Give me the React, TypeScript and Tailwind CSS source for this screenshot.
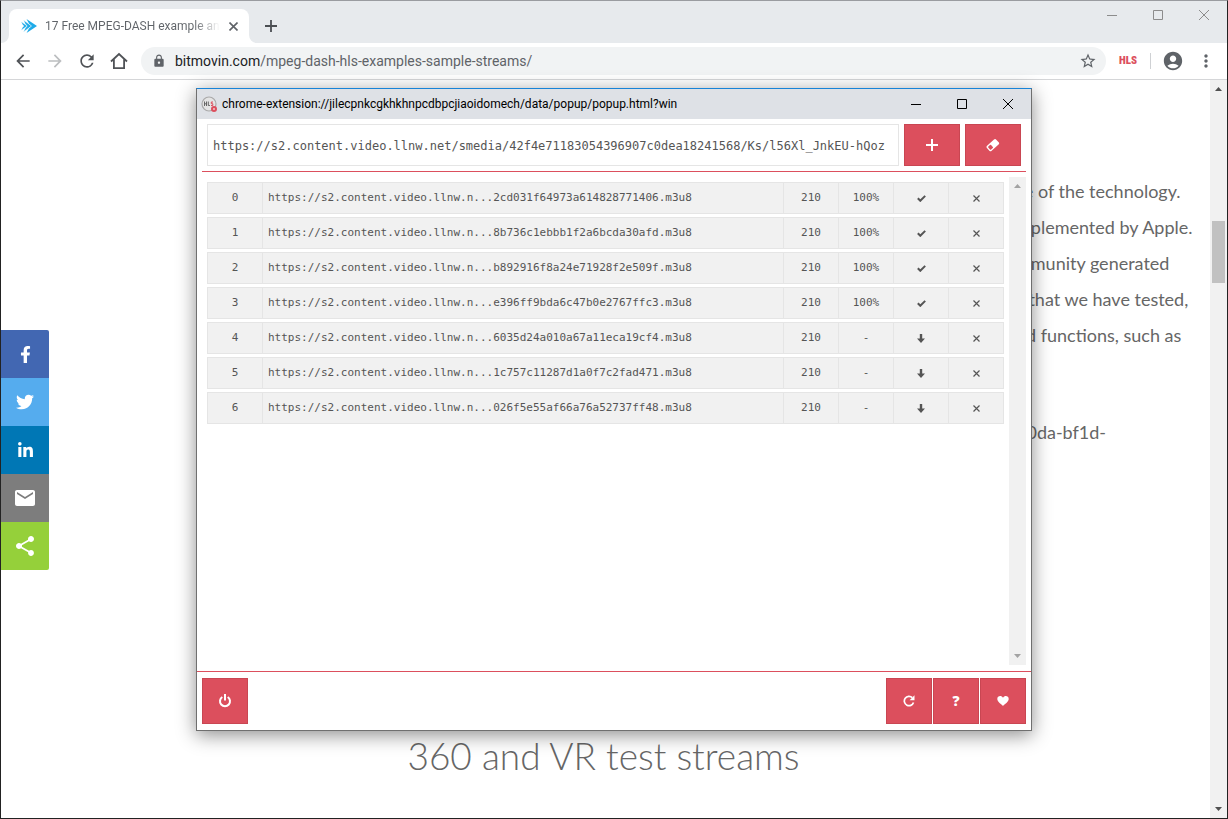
import React from 'react';
import { MdArrowBack, MdArrowForward, MdRefresh, MdLock, MdStarBorder, MdAccountCircle, MdMoreVert, MdEmail, MdShare } from 'react-icons/md';
import { FaFacebookF, FaTwitter, FaLinkedinIn } from 'react-icons/fa';

interface Segment {
  id: number;
  url: string;
  count: number;
  progress: string;
  done: boolean;
}

const segments: Segment[] = [
  { id: 0, url: 'https://s2.content.video.llnw.n...2cd031f64973a614828771406.m3u8', count: 210, progress: '100%', done: true },
  { id: 1, url: 'https://s2.content.video.llnw.n...8b736c1ebbb1f2a6bcda30afd.m3u8', count: 210, progress: '100%', done: true },
  { id: 2, url: 'https://s2.content.video.llnw.n...b892916f8a24e71928f2e509f.m3u8', count: 210, progress: '100%', done: true },
  { id: 3, url: 'https://s2.content.video.llnw.n...e396ff9bda6c47b0e2767ffc3.m3u8', count: 210, progress: '100%', done: true },
  { id: 4, url: 'https://s2.content.video.llnw.n...6035d24a010a67a11eca19cf4.m3u8', count: 210, progress: '-', done: false },
  { id: 5, url: 'https://s2.content.video.llnw.n...1c757c11287d1a0f7c2fad471.m3u8', count: 210, progress: '-', done: false },
  { id: 6, url: 'https://s2.content.video.llnw.n...026f5e55af66a76a52737ff48.m3u8', count: 210, progress: '-', done: false },
];

const introLines = [
  'se of the technology.',
  'mplemented by Apple.',
  'mmunity generated',
  's that we have tested,',
  'nd functions, such as',
];

const shareLinks = [
  { label: 'Facebook', className: 'bg-[#4267b2]', icon: <FaFacebookF size={17} /> },
  { label: 'Twitter', className: 'bg-[#55acee]', icon: <FaTwitter size={18} /> },
  { label: 'LinkedIn', className: 'bg-[#0077b5]', icon: <FaLinkedinIn size={17} /> },
  { label: 'Email', className: 'bg-[#7d7d7d]', icon: <MdEmail size={24} /> },
  { label: 'Share', className: 'bg-[#95d03a]', icon: <MdShare size={24} /> },
];

const Triangle: React.FC<{ down?: boolean; className?: string }> = ({ down, className }) => (
  <svg className={className} width="7" height="4" viewBox="0 0 7 4" fill="currentColor" aria-hidden="true">
    <path d={down ? 'M0 0h7L3.5 4z' : 'M0 4h7L3.5 0z'} />
  </svg>
);

const WindowButtons: React.FC<{ className: string }> = ({ className }) => (
  <div className={`flex ${className}`}>
    <button aria-label="Minimize" className="flex w-[46px] items-center justify-center">
      <svg width="10" height="10" viewBox="0 0 10 10" stroke="currentColor">
        <path d="M0 5.5h10" />
      </svg>
    </button>
    <button aria-label="Maximize" className="flex w-[46px] items-center justify-center">
      <svg width="10" height="10" viewBox="0 0 10 10" fill="none" stroke="currentColor">
        <path d="M.5.5h9v9h-9z" />
      </svg>
    </button>
    <button aria-label="Close" className="flex w-[46px] items-center justify-center">
      <svg width="10" height="10" viewBox="0 0 10 10" stroke="currentColor">
        <path d="M0 0l10 10M10 0L0 10" />
      </svg>
    </button>
  </div>
);

const TabStrip = () => (
  <div className="flex h-[42px] shrink-0 bg-[#e7eaed]">
    <div className="relative mt-2 ml-2 flex w-60 items-center rounded-t-lg bg-white pr-2.5 pl-3 text-[#5f6368]">
      <svg className="absolute bottom-0 -left-2" width="8" height="8" viewBox="0 0 8 8" fill="#fff">
        <path d="M8 0v8H0a8 8 0 0 0 8-8z" />
      </svg>
      <svg className="absolute -right-2 bottom-0" width="8" height="8" viewBox="0 0 8 8" fill="#fff">
        <path d="M0 0v8h8a8 8 0 0 1-8-8z" />
      </svg>
      <svg className="mr-2 shrink-0" width="16" height="14" viewBox="0 0 16 14" fill="#1eabe9">
        <path d="M5.500 0L16 7 5.500 14 8 9.500 10.500 7 8 4.500z" />
        <path d="M2.500 1L10.500 7l-8 6L4.200 9.200 6.200 7 4.200 4.800z" stroke="#fff" strokeWidth=".5" />
        <path d="M.3 2.800L6 7 .3 11.200 1.500 8.500 3 7 1.500 5.500z" stroke="#fff" strokeWidth=".3" />
      </svg>
      <span className="flex-1 bg-linear-to-r from-[#5f6368] from-85% to-transparent bg-clip-text font-['Roboto',sans-serif] text-xs whitespace-nowrap text-transparent">
        17 Free MPEG-DASH example an
      </span>
      <button aria-label="Close tab" className="ml-2 flex w-3 shrink-0 justify-center">
        <svg width="9" height="9" viewBox="0 0 9 9" stroke="currentColor" strokeWidth="1.600">
          <path d="M.5.5l8 8M8.500.5l-8 8" />
        </svg>
      </button>
    </div>
    <button aria-label="New tab" className="mt-2 ml-4 flex w-3 items-center text-[#4b4e52]">
      <svg width="12" height="12" viewBox="0 0 12 12" stroke="currentColor" strokeWidth="1.800">
        <path d="M6 0v12M0 6h12" />
      </svg>
    </button>
    <WindowButtons className="ml-auto h-7 text-[#8c8c8c]" />
  </div>
);

const Toolbar = () => (
  <div className="flex h-[37px] shrink-0 items-center border-b border-[#d5d6d8] bg-white pr-[11px] pl-3 text-[#5f6368]">
    <div className="flex gap-3 text-[#505357]">
      <button aria-label="Back"><MdArrowBack size={20} /></button>
      <button aria-label="Forward" className="text-[#bcbec0]"><MdArrowForward size={20} /></button>
      <button aria-label="Reload"><MdRefresh size={20} /></button>
      <button aria-label="Home">
        <svg width="20" height="20" viewBox="0 0 20 20" fill="none" stroke="currentColor" strokeWidth="1.800">
          <path d="M2 10.500L10 3l8 7.500M4.900 8.500v8.600h10.200V8.500" />
        </svg>
      </button>
    </div>
    <div className="ml-3 flex h-7 flex-1 items-center rounded-full bg-[#f1f3f4] pr-[9px] pl-[11px]">
      <MdLock size={14} className="mr-[9px] shrink-0" />
      <a href="#streams" className="flex-1 font-['Roboto',sans-serif] text-sm text-[#5f6368]">
        <span className="text-[#202124]">bitmovin.com</span>/mpeg-dash-hls-examples-sample-streams/
      </a>
      <button aria-label="Bookmark this page"><MdStarBorder size={18} /></button>
    </div>
    <button className="ml-3 flex w-5 justify-center font-['Roboto_Condensed','Open_Sans_Condensed','Liberation_Sans_Narrow','Roboto',sans-serif] text-[11px] font-black text-[#dc4f5d]">HLS</button>
    <span className="mr-[11px] ml-3 h-4 w-px bg-[#cfd1d4]" />
    <button aria-label="Profile"><MdAccountCircle size={22} /></button>
    <button aria-label="Menu" className="ml-3"><MdMoreVert size={20} /></button>
  </div>
);

const Page = () => (
  <main className="flex min-h-0 flex-1 bg-white">
    <nav aria-label="Share" className="mt-0.5 w-12 self-center overflow-hidden rounded-r-xs">
      {shareLinks.map((link) => (
        <a key={link.label} href="#share" aria-label={link.label} className={`flex h-12 items-center justify-center text-white ${link.className}`}>
          {link.icon}
        </a>
      ))}
    </nav>
    <article className="flex flex-1 flex-col font-['Lato',sans-serif] text-[#666]">
      <div className="w-[194px] self-end pt-[93px] text-lg leading-9 whitespace-nowrap">
        {introLines.map((line) => (
          <p key={line}>{line}</p>
        ))}
        <p className="mt-[61px]">00da-bf1d-</p>
      </div>
      <h2 className="mt-auto pr-13 pb-10 text-center text-[37px] leading-11 font-light">360 and VR test streams</h2>
    </article>
    <div className="flex w-[17px] flex-col items-center bg-[#f1f1f1] py-[7px] text-[#505050]">
      <Triangle className="shrink-0" />
      <div className="mt-[130px] h-[62px] w-[13px] bg-[#c1c1c1]" />
      <Triangle down className="mt-auto shrink-0" />
    </div>
  </main>
);

const CheckIcon = () => (
  <svg width="9" height="7" viewBox="0 0 9 7" fill="none" stroke="currentColor" strokeWidth="2">
    <path d="M.8 3.300l2.500 2.500L8.200.9" />
  </svg>
);

const DownIcon = () => (
  <svg width="8" height="9" viewBox="0 0 8 9" fill="currentColor">
    <path d="M2.800 0h2.400v4.500H8L4 9 0 4.500h2.800z" />
  </svg>
);

const RemoveIcon = () => (
  <svg width="7" height="7" viewBox="0 0 7 7" stroke="currentColor" strokeWidth="1.200">
    <path d="M.5.5l6 6M6.500.5l-6 6" />
  </svg>
);

const redButton = 'flex shrink-0 items-center justify-center border border-[#c94652] bg-[#dc4f5d] text-white';

const SegmentTable = () => (
  <table className="w-full table-fixed border-separate border-spacing-x-0 border-spacing-y-[3px] text-[11px] text-[#555]">
    <colgroup>
      <col className="w-14" />
      <col />
      <col className="w-[55px]" />
      <col className="w-[55px]" />
      <col className="w-[55px]" />
      <col className="w-[55px]" />
    </colgroup>
    <tbody>
      {segments.map((segment) => (
        <tr key={segment.id} className="h-8 bg-[#f1f1f1] text-center *:border-y *:border-r *:border-[#e5e5e5] *:p-0">
          <td className="border-l">{segment.id}</td>
          <td className="text-left"><span className="pl-[5px]">{segment.url}</span></td>
          <td>{segment.count}</td>
          <td>{segment.progress}</td>
          <td>
            <button aria-label={segment.done ? 'Downloaded' : 'Download'} className="flex w-full justify-center">
              {segment.done ? <CheckIcon /> : <DownIcon />}
            </button>
          </td>
          <td>
            <button aria-label="Remove" className="flex w-full justify-center"><RemoveIcon /></button>
          </td>
        </tr>
      ))}
    </tbody>
  </table>
);

const Popup = () => (
  <section className="absolute inset-x-49 inset-y-22 flex flex-col border border-[#6f6f6f] border-t-[#1883d7] bg-white shadow-[0_4px_18px_rgba(0,0,0,0.45)]">
    <header className="flex h-[30px] shrink-0 items-center bg-[#dee1e6] pl-1 font-['Roboto',sans-serif] text-xs text-black">
      <svg className="mr-1 shrink-0" width="17" height="17" viewBox="0 0 17 17" fill="none">
        <circle cx="8" cy="8" r="7" fill="#e4e4e4" stroke="#a9a9a9" strokeWidth="1.200" />
        <path d="M3.500 5.500v4.500M5.500 5.500v4.500M3.500 7.800h2M7.300 5.500v4h1.600" stroke="#666" />
        <path d="M12 6h-1.700v1.700h1.500v1.800H10" stroke="#dc4f5d" />
        <circle cx="13" cy="13" r="3" fill="#dc4f5d" />
        <circle cx="13" cy="13" r="1" fill="#f3c3c8" />
      </svg>
      <h1 className="flex-1 truncate">chrome-extension://jilecpnkcgkhkhnpcdbpcjiaoidomech/data/popup/popup.html?win</h1>
      <WindowButtons className="h-full" />
    </header>

    <form className="mx-[5px] flex gap-[5px] border-b border-[#dc4f5d] p-[5px] font-['DejaVu_Sans_Mono',monospace]">
      <input
        type="text"
        aria-label="Stream URL"
        defaultValue="https://s2.content.video.llnw.net/smedia/42f4e71183054396907c0dea18241568/Ks/l56Xl_JnkEU-hQoz"
        className="h-[42px] min-w-0 flex-1 border border-[#e5e5e5] px-[5px] pt-0.5 text-xs text-[#555] outline-none"
      />
      <button type="button" aria-label="Add" className={`h-[42px] w-14 ${redButton}`}>
        <svg width="12" height="12" viewBox="0 0 12 12" stroke="currentColor" strokeWidth="2">
          <path d="M6 0v12M0 6h12" />
        </svg>
      </button>
      <button type="button" aria-label="Clear" className={`h-[42px] w-14 ${redButton}`}>
        <svg width="14" height="14" viewBox="0 0 14 14">
          <g transform="rotate(-42 7 7)">
            <rect x=".5" y="3.600" width="12.500" height="6.800" rx="1.600" fill="#fff" />
            <rect x="1.800" y="4.900" width="3.800" height="4.200" rx=".8" fill="#dc4f5d" />
          </g>
        </svg>
      </button>
    </form>

    <div className="mx-[5px] mt-[5px] mb-1.5 flex min-h-0 flex-1 font-['DejaVu_Sans_Mono',monospace]">
      <div className="min-w-0 flex-1 overflow-hidden px-[5px] pt-[2px]">
        <SegmentTable />
      </div>
      <div className="flex w-[17px] shrink-0 flex-col items-center justify-between bg-[#f1f1f1] py-[7px] text-[#a3a3a3]">
        <Triangle />
        <Triangle down />
      </div>
    </div>

    <footer className="flex gap-px border-t border-[#dc4f5d] p-1.5 pr-[5px] pl-[5px]">
      <button aria-label="Power" className={`mr-auto size-[46px] ${redButton}`}>
        <svg width="14" height="14" viewBox="0 0 14 14" fill="none" stroke="currentColor" strokeWidth="2">
          <path d="M7 0v6.500M4.300 3a5 5 0 1 0 5.400 0" />
        </svg>
      </button>
      <button aria-label="Reload" className={`size-[46px] ${redButton}`}>
        <svg width="12" height="12" viewBox="0 0 12 12" fill="none">
          <path d="M9.300 2.600A4.700 4.700 0 1 0 10.500 7.500" stroke="#fff" strokeWidth="1.700" />
          <path d="M11.500.3v4.900H6.600z" fill="#fff" />
        </svg>
      </button>
      <button aria-label="Support" className={`size-[46px] font-['Open_Sans',sans-serif] text-sm font-extrabold ${redButton}`}>?</button>
      <button aria-label="Donate" className={`size-[46px] ${redButton}`}>
        <svg width="12" height="10" viewBox="0 0 12 10" fill="currentColor">
          <path d="M6 10C4.500 8.300.3 5.800.3 3 .3-.4 4.600-.8 6 1.800 7.400-.8 11.700-.4 11.700 3c0 2.800-4.200 5.300-5.700 7z" />
        </svg>
      </button>
    </footer>
  </section>
);

const App: React.FC = () => {
  return (
    <div className="relative flex h-screen flex-col overflow-hidden border border-[#222] border-t-[#9a9ca0] font-['Open_Sans','Noto_Sans',sans-serif]">
      <TabStrip />
      <Toolbar />
      <Page />
      <div className="pointer-events-none absolute -inset-px">
        <div className="pointer-events-auto">
          <Popup />
        </div>
      </div>
    </div>
  );
};

export default App;
